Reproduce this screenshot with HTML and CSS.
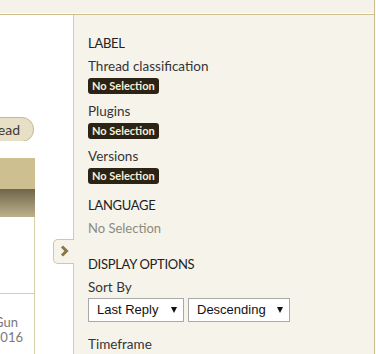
FILE: index.html
```html
<!DOCTYPE html>
<html lang="en">
<head>
    <meta charset="UTF-8">
    <meta name="viewport" content="width=device-width, initial-scale=1.0">
    <title>Thread Filters</title>
    <link rel="stylesheet" href="styles.css">
</head>
<body>
    <div class="page">
        <div class="topbar"></div>
        <div class="main">
            <div class="content">
                <div class="col">
                    <div class="actions"><span class="pill">Mark Read</span></div>
                    <div class="list-head"></div>
                    <div class="list-bar"></div>
                    <div class="list-row"></div>
                    <div class="list-row last">
                        <div class="meta">
                            <span class="who">Gun</span>
                            <span class="when">2016</span>
                        </div>
                    </div>
                </div>
            </div>

            <aside class="sidebar">
                <div class="toggle">
                    <svg width="20" height="25" viewBox="0 0 20 25">
                        <polyline points="8,7.5 12.5,12 8,16.5" fill="none" stroke="#8a7544" stroke-width="3"/>
                    </svg>
                </div>

                <!-- Label filters -->
                <div class="group">
                    <h3>LABEL</h3>
                    <div class="field">
                        <div class="field-name">Thread classification</div>
                        <span class="badge">No Selection</span>
                    </div>
                    <div class="field">
                        <div class="field-name">Plugins</div>
                        <span class="badge">No Selection</span>
                    </div>
                    <div class="field">
                        <div class="field-name">Versions</div>
                        <span class="badge">No Selection</span>
                    </div>
                </div>

                <div class="group lang">
                    <h3>LANGUAGE</h3>
                    <div class="muted">No Selection</div>
                </div>

                <div class="group display">
                    <h3>DISPLAY OPTIONS</h3>
                    <div class="field">
                        <div class="field-name">Sort By</div>
                        <div class="selects">
                            <div class="select sort">Last Reply <span class="arrow"></span></div>
                            <div class="select order">Descending <span class="arrow"></span></div>
                        </div>
                    </div>
                    <div class="field time">
                        <div class="field-name">Timeframe</div>
                    </div>
                </div>
            </aside>
        </div>
    </div>
</body>
</html>
```

FILE: styles.css
```css
   body {
       margin: 0;
       padding: 0;
       background: #ffffff;
       font-family: Lato, "Open Sans", sans-serif;
       font-size: 13px;
       line-height: 16px;
       overflow: hidden;
   }
   .page {
       width: 374px;
       height: 100vh;
       border-right: 1px solid #cdbf8c;
       display: flex;
       flex-direction: column;
   }
   .topbar {
       flex-shrink: 0;
       height: 13px;
       background: #f5f2ea;
       border-bottom: 1px solid #ffffff;
   }
   .main {
       flex: 1;
       min-height: 0;
       overflow: hidden;
       display: flex;
       border-top: 1px solid #cdbf8c;
   }
   .content {
       flex-shrink: 0;
       width: 73px;
       background: #ffffff;
   }
   .col {
       width: 35px;
   }
   .actions {
       padding-top: 102px;
       height: 24px;
       display: flex;
       justify-content: flex-end;
       overflow: hidden;
   }
   .pill {
       flex-shrink: 0;
       height: 23px;
       line-height: 23px;
       margin-right: 1px;
       padding: 0 13px 0 12px;
       border: 1px solid #c8b988;
       border-radius: 12px;
       background: #e8e0c6;
       color: #3a3a3a;
       font-size: 14px;
       white-space: nowrap;
   }
   .list-head {
       margin-top: 17px;
       height: 31px;
       background: #cdbf8f;
   }
   .list-bar {
       height: 28px;
       background: linear-gradient(#70654a, #bdb18c);
   }
   .list-row {
       width: 34px;
       height: 76px;
       border-right: 1px solid #d8cea9;
       border-bottom: 1px solid #d8cea9;
   }
   .list-row.last {
       height: 80px;
       border-bottom: none;
   }
   .meta {
       padding-top: 21px;
       display: flex;
       flex-direction: column;
       align-items: flex-end;
       padding-right: 11px;
       color: #787878;
       font-size: 13px;
       line-height: 15px;
   }
   .who {
       margin-right: 5px;
   }

   /* Sidebar */
   .sidebar {
       position: relative;
       flex-shrink: 0;
       width: 286px;
       padding: 20px 0 0 14px;
       background: #f6f3eb;
       border-left: 1px solid #d6cba5;
       color: #2e2e2e;
   }
   .toggle {
       position: absolute;
       top: 224px;
       left: -21px;
       width: 20px;
       height: 23px;
       border: 1px solid #d3c79e;
       border-right: none;
       border-radius: 5px 0 0 5px;
       background: #f6f3eb;
       display: flex;
       align-items: center;
   }
   .toggle svg {
       display: block;
   }
   h3 {
       margin: 0 0 7px;
       font-size: 13px;
       font-weight: normal;
       letter-spacing: -0.3px;
       color: #222222;
   }
   .field {
       margin-bottom: 9px;
   }
   .field-name {
       color: #353535;
       font-size: 13.5px;
       margin-bottom: 3px;
   }
   .badge {
       display: inline-block;
       height: 16px;
       line-height: 16px;
       padding: 0 4px;
       border-radius: 3px;
       background: #2b2416;
       color: #f7f1dc;
       font-size: 11px;
       font-weight: bold;
   }
   .lang {
       margin-top: 13px;
   }
   .muted {
       color: #8d8b80;
   }
   .display {
       margin-top: 20px;
   }
   .selects {
       display: flex;
       gap: 4px;
   }
   .select {
       box-sizing: border-box;
       height: 24px;
       padding: 0 6px 0 8px;
       display: flex;
       align-items: center;
       justify-content: space-between;
       background: #ffffff;
       border: 1px solid #a9a9a9;
       font-family: "Liberation Sans", Arial, sans-serif;
       font-size: 13px;
       color: #111111;
   }
   .select.sort {
       width: 96px;
   }
   .select.order {
       width: 102px;
   }
   .arrow {
       width: 0;
       height: 0;
       border-left: 3.5px solid transparent;
       border-right: 3.5px solid transparent;
       border-top: 6px solid #111111;
   }
   .field.time {
       margin-top: 14px;
   }
```
